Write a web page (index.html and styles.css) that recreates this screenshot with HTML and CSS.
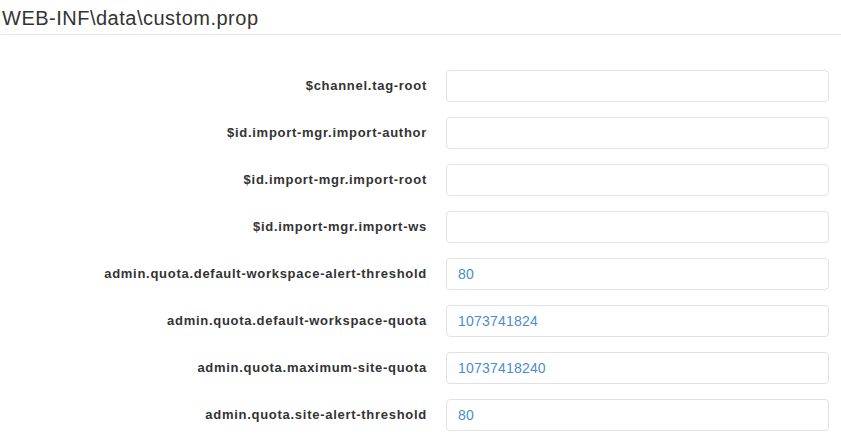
FILE: index.html
```html
<!doctype html>
<html>

<head>
    <meta charset="utf-8">
    <title>custom.prop</title>
    <meta name="viewport" content="width=device-width,initial-scale=1">
    <link rel="stylesheet" href="styles.css">
</head>

<body>
    <h3 class="title">WEB-INF\data\custom.prop</h3>

    <form class="props">
        <div class="row">
            <label class="label" for="p1">$channel.tag-root</label>
            <input class="input" type="text" id="p1" value="">
        </div>
        <div class="row">
            <label class="label" for="p2">$id.import-mgr.import-author</label>
            <input class="input" type="text" id="p2" value="">
        </div>
        <div class="row">
            <label class="label" for="p3">$id.import-mgr.import-root</label>
            <input class="input" type="text" id="p3" value="">
        </div>
        <div class="row">
            <label class="label" for="p4">$id.import-mgr.import-ws</label>
            <input class="input" type="text" id="p4" value="">
        </div>
        <div class="row">
            <label class="label" for="p5">admin.quota.default-workspace-alert-threshold</label>
            <input class="input" type="text" id="p5" value="80">
        </div>
        <div class="row">
            <label class="label" for="p6">admin.quota.default-workspace-quota</label>
            <input class="input" type="text" id="p6" value="1073741824">
        </div>
        <div class="row">
            <label class="label" for="p7">admin.quota.maximum-site-quota</label>
            <input class="input" type="text" id="p7" value="10737418240">
        </div>
        <div class="row">
            <label class="label" for="p8">admin.quota.site-alert-threshold</label>
            <input class="input" type="text" id="p8" value="80">
        </div>
    </form>
</body>

</html>
```

FILE: styles.css
```css
body {
    margin: 0;
    padding: 0 0 0 1px;
    font-family: "Liberation Sans", Arial, sans-serif;
    font-size: 14px;
    color: #333;
    background: #fff;
}

.title {
    margin: 0;
    padding: 10px 0 7px 1px;
    font-size: 20px;
    font-weight: normal;
    line-height: 17px;
    letter-spacing: 0.5px;
    color: #333;
    border-bottom: 1px solid #e5e5e5;
}

.props {
    padding: 35px 12px 0 0;
}

.row {
    display: grid;
    grid-template-columns: 426px 1fr;
    column-gap: 19px;
    align-items: center;
    margin-bottom: 15px;
}

.label {
    padding-bottom: 2px;
    text-align: right;
    font-size: 13px;
    font-weight: bold;
    letter-spacing: 0.72px;
    color: #333;
}

.input {
    height: 32px;
    box-sizing: border-box;
    padding: 6px 11px;
    border: 1px solid #e2e2e2;
    border-radius: 4px;
    font-family: "Liberation Sans", Arial, sans-serif;
    font-size: 14px;
    letter-spacing: 0.2px;
    color: #4b8bd0;
    background: #fff;
    outline: none;
}
```
